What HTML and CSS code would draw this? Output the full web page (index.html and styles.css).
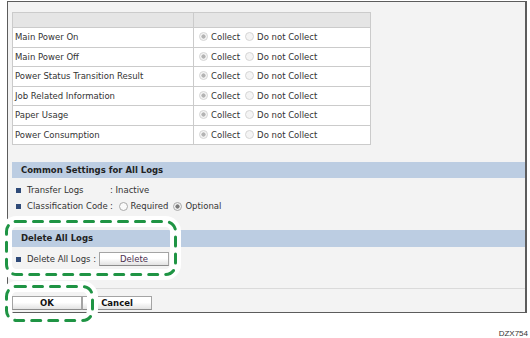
FILE: index.html
```html
<!doctype html>
<html lang="en">
  <head>
    <meta charset="utf-8">
    <title>Log Settings</title>
    <link rel="stylesheet" href="styles.css">
  </head>
  <body>
    <div id="frame">
      <table id="logs">
        <tr class="head"><th></th><th></th></tr>
        <tr><td>Main Power On</td><td class="opts"><span class="radio pale on"></span>Collect<span class="radio pale next"></span>Do not Collect</td></tr>
        <tr><td>Main Power Off</td><td class="opts"><span class="radio pale on"></span>Collect<span class="radio pale next"></span>Do not Collect</td></tr>
        <tr><td>Power Status Transition Result</td><td class="opts"><span class="radio pale on"></span>Collect<span class="radio pale next"></span>Do not Collect</td></tr>
        <tr><td>Job Related Information</td><td class="opts"><span class="radio pale on"></span>Collect<span class="radio pale next"></span>Do not Collect</td></tr>
        <tr><td>Paper Usage</td><td class="opts"><span class="radio pale on"></span>Collect<span class="radio pale next"></span>Do not Collect</td></tr>
        <tr><td>Power Consumption</td><td class="opts"><span class="radio pale on"></span>Collect<span class="radio pale next"></span>Do not Collect</td></tr>
      </table>

      <div class="band">Common Settings for All Logs</div>
      <div class="item first"><span class="bullet"></span><span class="label">Transfer Logs</span>: Inactive</div>
      <div class="item"><span class="bullet"></span><span class="label">Classification Code</span>: <span class="radio lead"></span>Required<span class="radio next on"></span>Optional</div>

      <div class="band second">Delete All Logs</div>
      <div class="item first"><span class="bullet"></span>Delete All Logs :<button class="btn delete">Delete</button></div>

      <div id="actions">
        <button class="btn main">OK</button>
        <button class="btn main">Cancel</button>
      </div>
    </div>
    <div id="code">DZX754</div>

    <!-- callout marks drawn over the page -->
    <svg class="mark" id="mark_delete" width="180" height="64">
      <rect class="halo" x="5.5" y="5.5" width="169" height="53" rx="10"/>
      <rect class="dash" x="5.5" y="5.5" width="169" height="53" rx="10"/>
    </svg>
    <svg class="mark" id="mark_ok" width="97" height="45">
      <rect class="halo" x="5.5" y="5.5" width="86" height="34" rx="10"/>
      <rect class="dash" x="5.5" y="5.5" width="86" height="34" rx="10"/>
    </svg>
  </body>
</html>
```

FILE: styles.css
```css
body {
  margin: 0;
  background: #fff;
  font-family: "DejaVu Sans", Verdana, sans-serif;
  font-size: 8.5px;
  color: #333;
  position: relative;
}
#frame {
  margin: 1px 0 0 7px;
  width: 513px;
  border: 1px solid #5c5c5c;
  border-right-width: 2px;
  background: #f3f3f3;
  padding: 10px 0 2px 4px;
}
#logs {
  border-collapse: collapse;
  table-layout: fixed;
  width: 359px;
  background: #fff;
}
#logs th,
#logs td {
  border: 1px solid #cbcbcb;
  padding: 0 0 0 2px;
  text-align: left;
  font-weight: normal;
  white-space: nowrap;
}
#logs th:first-child,
#logs td:first-child {
  width: 178px;
}
#logs .head {
  height: 15px;
}
#logs .head th {
  background: #e5e5e5;
}
#logs tr {
  height: 19.5px;
}
#logs td.opts {
  padding-left: 5px;
}
.radio {
  display: inline-block;
  width: 7px;
  height: 7px;
  border: 1px solid #a9a9a9;
  border-radius: 50%;
  background: #fafafa;
  vertical-align: -1px;
  margin-right: 3px;
}
.radio.on {
  background: radial-gradient(circle, #7a7a7a 0 1.8px, #f2f2f2 2.4px);
}
.radio.pale {
  border-color: #d6d6d6;
  background: #f4f4f4;
}
.radio.pale.on {
  background: radial-gradient(circle, #b4b4b4 0 1.8px, #f4f4f4 2.4px);
}
.radio.next {
  margin-left: 5px;
}
.radio.lead {
  margin-left: 3px;
}
.band {
  height: 16px;
  line-height: 16px;
  margin-top: 17px;
  padding-left: 9px;
  background: #bccde2;
  font-weight: bold;
  color: #222;
}
.band.second {
  margin-top: 16px;
  height: 17px;
  line-height: 17px;
}
.item {
  height: 16px;
  display: flex;
  align-items: center;
  padding-left: 4px;
  white-space: pre;
}
.item.first {
  margin-top: 4px;
}
.bullet {
  width: 5px;
  height: 5px;
  background: #2f4a78;
  margin-right: 6px;
}
.label {
  display: inline-block;
  width: 83px;
}
.btn {
  font: inherit;
  height: 14px;
  padding: 0;
  border: 1px solid #a4a4a4;
  border-bottom-color: #8c8c8c;
  background: linear-gradient(#fff, #fff 45%, #e2e2e2);
  color: #333;
}
.btn.delete {
  width: 70px;
  margin-left: 3px;
  color: #4b3050;
}
#actions {
  margin-top: 21px;
  border-top: 1px solid #dadada;
  padding-top: 7px;
  display: flex;
}
.btn.main {
  width: 70px;
  font-weight: bold;
  color: #111;
}
#code {
  margin-top: 16px;
  text-align: right;
  padding-right: 2px;
  font-family: "Liberation Sans", Arial, sans-serif;
  font-size: 8px;
  line-height: 9px;
  color: #333;
}
.mark {
  position: absolute;
  left: 1px;
}
#mark_delete {
  top: 216px;
}
#mark_ok {
  top: 281px;
}
.mark rect {
  fill: none;
}
.mark .halo {
  stroke: #fff;
  stroke-width: 11;
}
.mark .dash {
  stroke: #1f9444;
  stroke-width: 3;
  stroke-dasharray: 9 8;
  stroke-linecap: round;
}
```
